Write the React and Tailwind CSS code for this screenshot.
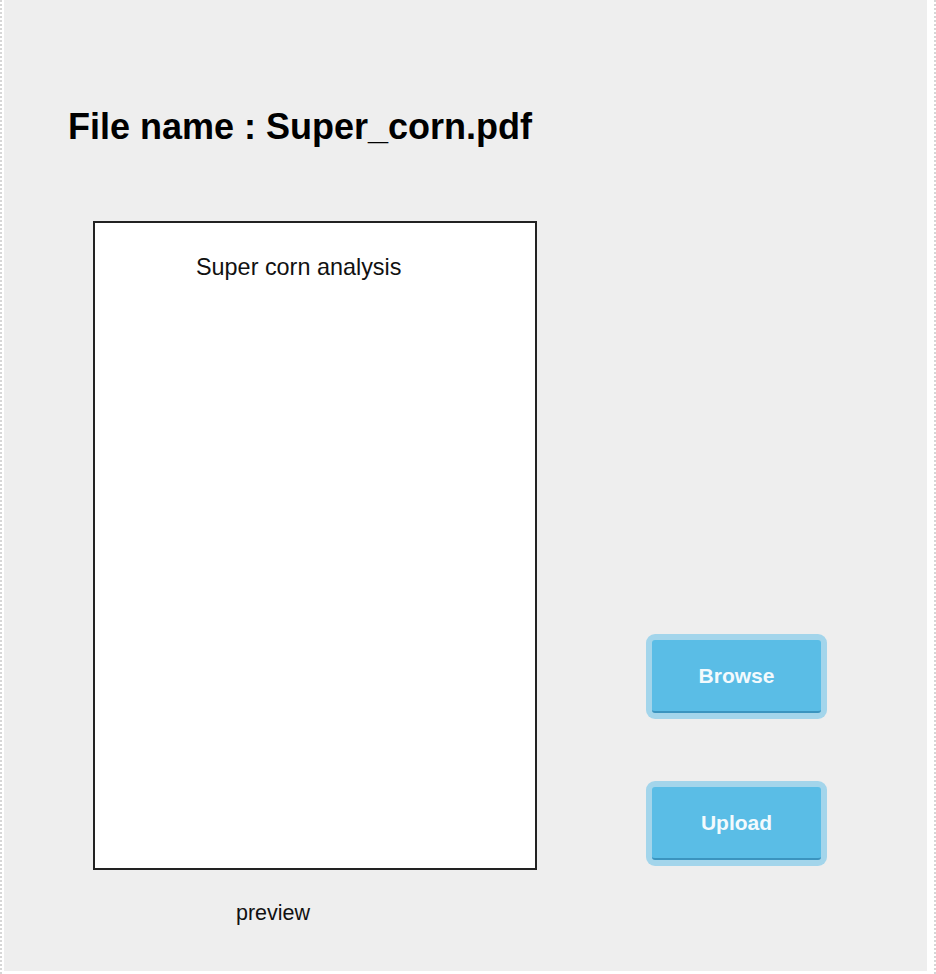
import React from 'react';

function ActionButton({ label }) {
  return (
    <button
      type="button"
      className="w-[181px] h-[85px] rounded-[9px] bg-[#a3d5eb] p-[6px] cursor-pointer"
    >
      <span className="flex items-center justify-center w-full h-full rounded-[3px] bg-[#5abde6] border-b-2 border-[#3b94bf] text-[21px] font-bold text-[#f3fafd]">
        {label}
      </span>
    </button>
  );
}

function App() {
  return (
    <div
      className="w-[936px] h-[974px] bg-white flex"
      style={{ fontFamily: '"Liberation Sans", Arial, sans-serif' }}
    >
      <div className="w-[4px] h-full border-l-2 border-dotted border-[#d6d6d6]" />
      <div className="w-[923px] h-[971px] bg-[#eeeeee] flex flex-col">
        <h1 className="mt-[106px] ml-[64px] h-[41px] leading-[41px] text-[36px] font-bold text-black">
          File name : Super_corn.pdf
        </h1>

        <div className="flex mt-[74px]">
          <div className="ml-[89px] flex flex-col">
            <div className="w-[444px] h-[649px] bg-white border-2 border-[#222222]">
              <p className="pt-[31px] pl-[101px] text-[23.4px] leading-[27px] text-[#111111]">
                Super corn analysis
              </p>
            </div>
            <p className="mt-[31px] ml-[143px] text-[21.5px] leading-[25px] text-[#111111]">
              preview
            </p>
          </div>

          <div className="ml-[109px] mt-[413px] flex flex-col gap-[62px]">
            <ActionButton label="Browse" />
            <ActionButton label="Upload" />
          </div>
        </div>
      </div>
      <div className="flex-1 h-full flex justify-end">
        <div className="w-[2px] h-full border-r-2 border-dotted border-[#d6d6d6]" />
      </div>
    </div>
  );
}

export default App;
